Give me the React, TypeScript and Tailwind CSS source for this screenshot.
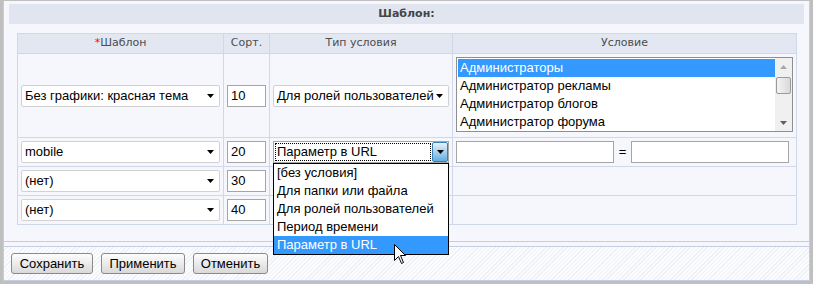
import React from 'react';

function Caret({ color = '#000' }: { color?: string }) {
  return (
    <svg width="7" height="4" viewBox="0 0 7 4">
      <path d="M0 0h7L3.5 4z" fill={color} />
    </svg>
  );
}

function CaretUp({ color }: { color: string }) {
  return (
    <svg width="7" height="4" viewBox="0 0 7 4">
      <path d="M0 4h7L3.5 0z" fill={color} />
    </svg>
  );
}

function Select({ value }: { value: string }) {
  return (
    <div className="flex h-[22px] items-center justify-between rounded-[2px] border border-[#d2d2d2] bg-white pl-[3px] pr-[5px] leading-[20px]">
      <span className="whitespace-nowrap">{value}</span>
      <Caret />
    </div>
  );
}

function Input({ value = '', className = '' }: { value?: string; className?: string }) {
  return (
    <div className={`h-[22px] border border-[#a5a5a5] bg-white pl-[3px] leading-[20px] ${className}`}>{value}</div>
  );
}

const popupItems = ['[без условия]', 'Для папки или файла', 'Для ролей пользователей', 'Период времени', 'Параметр в URL'];

function TypeSelectOpen() {
  return (
    <div className="relative">
      <div className="flex h-[22px] items-stretch border border-[#a5a5a5] bg-white">
        <div className="m-px flex flex-1 items-center border border-dotted border-black pl-px leading-[16px]">Параметр в URL</div>
        <div className="flex w-[16px] items-center justify-center rounded-[2px] border border-[#3c7fb1] bg-gradient-to-b from-[#e5f2fb] to-[#63ace0]">
          <Caret />
        </div>
      </div>
      <div className="absolute left-0 top-full z-10 w-full border border-black bg-white">
        {popupItems.map((t, i) => (
          <div
            key={t}
            className={
              i === popupItems.length - 1
                ? 'h-[18px] whitespace-nowrap bg-[#3399ff] pl-[3px] leading-[18px] text-white'
                : 'h-[18px] whitespace-nowrap pl-[3px] leading-[18px]'
            }
          >
            {t}
          </div>
        ))}
      </div>
    </div>
  );
}

const roles = ['Администраторы', 'Администратор рекламы', 'Администратор блогов', 'Администратор форума'];

function RolesList() {
  return (
    <div className="flex h-[75px] border border-[#8e8f8f] bg-white">
      <div className="flex-1 pl-px pt-px">
        {roles.map((r, i) => (
          <div
            key={r}
            className={
              i === 0
                ? 'h-[18px] bg-[#3399ff] pl-[2px] leading-[18px] text-white'
                : 'h-[18px] pl-[2px] leading-[18px]'
            }
          >
            {r}
          </div>
        ))}
      </div>
      <div className="flex w-[17px] flex-col bg-[#f0f0f0]">
        <div className="flex h-[17px] items-center justify-center">
          <CaretUp color="#a8a8a8" />
        </div>
        <div className="mx-px mt-[2px] h-[17px] rounded-[2px] border border-[#9a9a9a] bg-gradient-to-r from-[#f4f4f4] to-[#d9d9d9]" />
        <div className="flex-1" />
        <div className="flex h-[17px] items-center justify-center">
          <Caret color="#5f5f5f" />
        </div>
      </div>
    </div>
  );
}

function Cursor() {
  return (
    <svg className="absolute left-[394px] top-[244px] z-20" width="13" height="21" viewBox="0 0 13 21">
      <path d="M0.5 0.5V16.5L4.5 12.5L7.5 19.5L9.5 18.5L6.5 11.5H11.5Z" fill="#fff" stroke="#000" strokeWidth="1" />
    </svg>
  );
}

export default function App() {
  const td = 'border border-[#d0d7ea] px-[3px] py-[3px] align-middle';
  const th = 'h-[20px] border border-[#d0d7ea] bg-[#e3e7f2] p-0 text-center align-middle font-normal';
  return (
    <div className="relative h-[284px] w-[813px] bg-[#bfbfbf] px-[3px] pb-[3px] pt-px font-['Liberation_Sans',Arial,sans-serif] text-[13px] text-black">
      <div className="flex h-full flex-col border-x border-[#c5cde6] bg-[#f5f7fc]">
        <div className="h-[241px] border-b border-[#c5cde6] px-[5px] pt-[3px]">
          <div className="flex h-[20px] items-center justify-center bg-[#e0e5f0] font-['DejaVu_Sans',Verdana,sans-serif] text-[11px] font-bold text-[#454545]">
            Шаблон:
          </div>
          <div className="mt-[9px] px-[8px]">
            <table className="w-[779px] table-fixed border-collapse">
              <colgroup>
                <col className="w-[206px]" />
                <col className="w-[46px]" />
                <col className="w-[183px]" />
                <col className="w-[344px]" />
              </colgroup>
              <thead>
                <tr className="font-['DejaVu_Sans',Verdana,sans-serif] text-[11px] text-[#4d4d4d]">
                  <th className={th}>
                    <span className="text-[#ff0000]">*</span>Шаблон
                  </th>
                  <th className={th}>Сорт.</th>
                  <th className={th}>Тип условия</th>
                  <th className={th}>Условие</th>
                </tr>
              </thead>
              <tbody>
                <tr>
                  <td className={td}>
                    <Select value="Без графики: красная тема" />
                  </td>
                  <td className={td}>
                    <Input value="10" />
                  </td>
                  <td className={td}>
                    <Select value="Для ролей пользователей" />
                  </td>
                  <td className="border border-[#d0d7ea] px-[3px] pb-[5px] pt-[3px] align-middle">
                    <RolesList />
                  </td>
                </tr>
                <tr>
                  <td className={td}>
                    <Select value="mobile" />
                  </td>
                  <td className={td}>
                    <Input value="20" />
                  </td>
                  <td className={td}>
                    <TypeSelectOpen />
                  </td>
                  <td className={td}>
                    <div className="flex items-center">
                      <Input className="w-[158px]" />
                      <span className="w-[17px] text-center">=</span>
                      <Input className="w-[158px]" />
                    </div>
                  </td>
                </tr>
                <tr>
                  <td className={td}>
                    <Select value="(нет)" />
                  </td>
                  <td className={td}>
                    <Input value="30" />
                  </td>
                  <td className={td} />
                  <td className={td} />
                </tr>
                <tr>
                  <td className={td}>
                    <Select value="(нет)" />
                  </td>
                  <td className={td}>
                    <Input value="40" />
                  </td>
                  <td className={td} />
                  <td className={td} />
                </tr>
              </tbody>
            </table>
          </div>
        </div>
        <div className="mt-[4px] flex flex-1 gap-[8px] border-y border-[#c5cde6] bg-[repeating-linear-gradient(135deg,#fbfcfd_0px,#fbfcfd_2px,#eef0f5_2px,#eef0f5_3px)] pl-[7px] pt-[6px]">
          <button className="h-[21px] w-[82px] rounded-[3px] border border-[#8a8a8a] bg-gradient-to-b from-[#fdfdfd] to-[#d9d9d9] leading-[19px]">Сохранить</button>
          <button className="h-[21px] w-[84px] rounded-[3px] border border-[#8a8a8a] bg-gradient-to-b from-[#fdfdfd] to-[#d9d9d9] leading-[19px]">Применить</button>
          <button className="h-[21px] w-[75px] rounded-[3px] border border-[#8a8a8a] bg-gradient-to-b from-[#fdfdfd] to-[#d9d9d9] leading-[19px]">Отменить</button>
        </div>
      </div>
      <Cursor />
    </div>
  );
}
